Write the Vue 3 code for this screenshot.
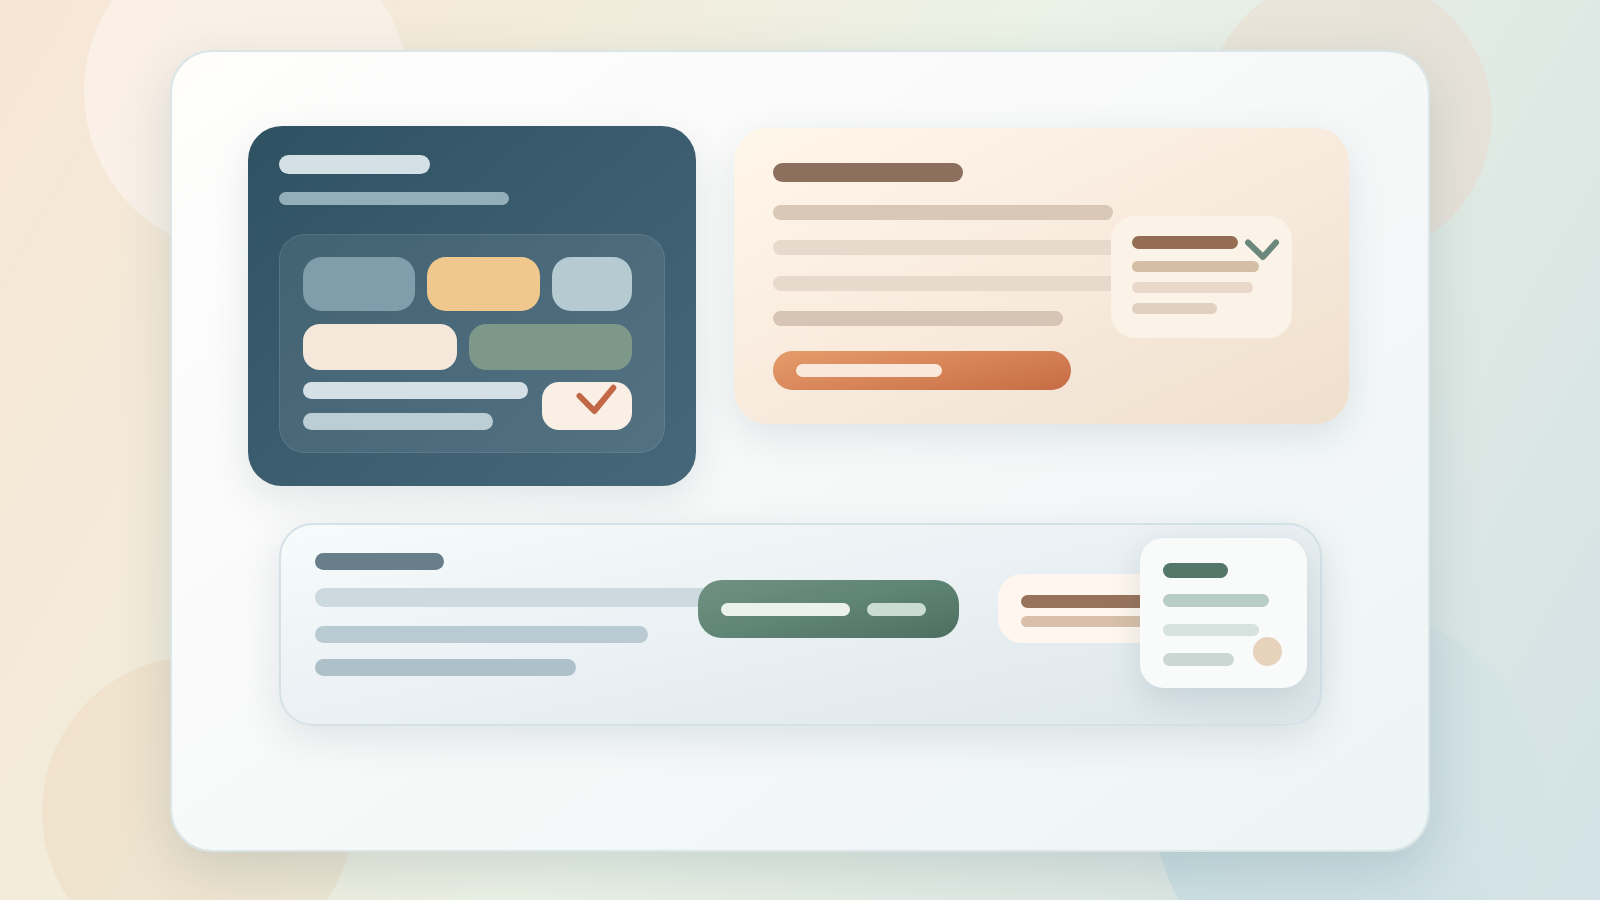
<script setup>
const planLines = [
  { width: 340, tone: 'sand' },
  { width: 372, tone: 'blush' },
  { width: 372, tone: 'blush' },
  { width: 290, tone: 'clay' },
]
</script>

<template>
  <div class="stage">
    <div class="backdrop" aria-hidden="true">
      <span class="orb orb-cream"></span>
      <span class="orb orb-rose"></span>
      <span class="orb orb-amber"></span>
      <span class="orb orb-blue"></span>
    </div>

    <main class="panel">
      <div class="row">
        <section class="card board">
          <div class="bar board-title"></div>
          <div class="bar board-sub"></div>
          <div class="tray">
            <div class="tiles tiles-top">
              <div class="tile steel"></div>
              <div class="tile gold"></div>
              <div class="tile mist"></div>
            </div>
            <div class="tiles tiles-mid">
              <div class="tile shell"></div>
              <div class="tile sage"></div>
            </div>
            <div class="tray-foot">
              <div class="tray-lines">
                <div class="bar tray-line-a"></div>
                <div class="bar tray-line-b"></div>
              </div>
              <div class="tile done">
                <svg width="90" height="48" viewBox="0 0 90 48" aria-hidden="true">
                  <path d="M37.5 14 L52.3 29 L71.3 5.8" fill="none" stroke="#c26847" stroke-width="6" stroke-linecap="round" stroke-linejoin="round" />
                </svg>
              </div>
            </div>
          </div>
        </section>

        <section class="card plan">
          <div class="bar plan-title"></div>
          <div class="plan-lines">
            <div
              v-for="(line, i) in planLines"
              :key="i"
              class="bar"
              :class="line.tone"
              :style="{ width: line.width + 'px' }"
            ></div>
          </div>
          <button class="cta" type="button" aria-label="Continue"><span class="bar cta-bar"></span></button>
          <div class="note">
            <div class="bar note-a"></div>
            <div class="bar note-b"></div>
            <div class="bar note-c"></div>
            <div class="bar note-d"></div>
            <svg class="note-check" width="36" height="24" viewBox="0 0 36 24" aria-hidden="true">
              <path d="M4 4.5 L19 19 L32 4.5" fill="none" stroke="#6c887c" stroke-width="6" stroke-linecap="round" stroke-linejoin="round" />
            </svg>
          </div>
        </section>
      </div>

      <section class="card strip">
        <div class="strip-text">
          <div class="bar strip-title"></div>
          <div class="bar strip-a"></div>
          <div class="bar strip-b"></div>
          <div class="bar strip-c"></div>
        </div>
        <button class="go" type="button" aria-label="Open">
          <span class="bar go-a"></span>
          <span class="bar go-b"></span>
        </button>
        <div class="chip">
          <div class="bar chip-a"></div>
          <div class="bar chip-b"></div>
        </div>
        <div class="ticket">
          <div class="bar ticket-a"></div>
          <div class="bar ticket-b"></div>
          <div class="bar ticket-c"></div>
          <div class="bar ticket-d"></div>
          <span class="dot"></span>
        </div>
      </section>
    </main>
  </div>
</template>

<style>
body {
  margin: 0;
}
</style>

<style scoped>
* {
  box-sizing: border-box;
}
.stage {
  position: relative;
  display: flex;
  min-height: 100vh;
  padding: 50px 170px 48px;
  overflow: hidden;
  font-family: Inter, "Liberation Sans", sans-serif;
  background: linear-gradient(120deg, #f7e6d5 0%, #f3ecdb 26%, #ebf2e7 50%, #dee8e4 78%, #d2e2e6 100%);
}
.backdrop {
  position: absolute;
  inset: 0;
}
.orb {
  position: absolute;
  border-radius: 50%;
}
.orb-cream {
  left: 84px;
  top: -71px;
  width: 325px;
  height: 325px;
  background: rgba(252, 246, 240, 0.62);
}
.orb-rose {
  right: 108px;
  top: -27px;
  width: 288px;
  height: 288px;
  background: rgba(240, 212, 196, 0.38);
}
.orb-amber {
  left: 42px;
  bottom: -68px;
  width: 312px;
  height: 312px;
  background: rgba(232, 204, 170, 0.27);
}
.orb-blue {
  right: 54px;
  bottom: -101px;
  width: 392px;
  height: 392px;
  background: linear-gradient(90deg, rgba(186, 216, 226, 0.5) 0%, rgba(198, 220, 229, 0.42) 65%, rgba(210, 226, 230, 0.2) 100%);
}
.panel {
  position: relative;
  flex: 1;
  min-width: 0;
  padding: 74px 79px 74px 76px;
  border: 2px solid #d9e5e7;
  border-radius: 42px;
  background: linear-gradient(145deg, #fffefd 0%, #f8f9f9 45%, #edf4f4 100%);
  background-clip: padding-box;
  box-shadow: 0 18px 52px rgba(46, 82, 92, 0.17);
}
.row {
  display: grid;
  grid-template-columns: 448fr 615fr;
  gap: 38px;
  align-items: start;
}
.card {
  position: relative;
  border-radius: 34px;
  box-shadow: 0 12px 38px rgba(46, 82, 92, 0.12);
}
.bar {
  display: block;
  max-width: 100%;
  border-radius: 10px;
}
.board {
  padding: 29px 31px 33px;
  background: linear-gradient(140deg, #2f5263 0%, #466779 100%);
}
.board-title {
  width: 151px;
  height: 19px;
  background: #d3e1e7;
}
.board-sub {
  width: 230px;
  height: 13px;
  margin-top: 18px;
  background: #94aeba;
}
.tray {
  margin-top: 29px;
  padding: 22px 32px 22px 23px;
  border: 1px solid rgba(255, 255, 255, 0.1);
  border-radius: 26px;
  background: rgba(255, 255, 255, 0.08);
}
.tiles {
  display: grid;
  gap: 12px;
}
.tiles-top {
  grid-template-columns: 112fr 113fr 80fr;
}
.tiles-mid {
  grid-template-columns: 154fr 163fr;
  margin-top: 13px;
}
.tile {
  height: 54px;
  border-radius: 19px;
}
.tiles-mid .tile {
  height: 46px;
  border-radius: 17px;
}
.steel {
  background: #7f9dab;
}
.gold {
  background: #f0c88e;
}
.mist {
  background: #b6cad2;
}
.shell {
  background: #f5e7da;
}
.sage {
  background: #7d9789;
}
.tray-foot {
  display: flex;
  justify-content: space-between;
  margin-top: 12px;
}
.tray-lines {
  display: flex;
  flex-direction: column;
  justify-content: space-between;
}
.tray-line-a {
  width: 225px;
  height: 17px;
  background: #d4e0e5;
}
.tray-line-b {
  width: 190px;
  height: 17px;
  background: #bbced5;
}
.tray-foot .done {
  width: 90px;
  height: 48px;
  border-radius: 17px;
  background: #faefe5;
}
.done svg {
  display: block;
}
.plan {
  margin-top: 2px;
  padding: 35px 39px 34px;
  background: linear-gradient(155deg, #fff6ea 0%, #f9ecdf 45%, #efdfcd 100%);
}
.plan-title {
  width: 190px;
  height: 19px;
  background: #8c6f5c;
}
.plan-lines {
  display: flex;
  flex-direction: column;
  justify-content: space-between;
  height: 121px;
  margin-top: 23px;
}
.plan-lines .bar {
  height: 15px;
}
.sand {
  background: #d9c8b8;
}
.blush {
  background: #e7d9cc;
}
.clay {
  background: #d6c4b5;
}
.cta {
  display: flex;
  align-items: center;
  width: 298px;
  height: 39px;
  margin: 25px 0 0;
  padding: 0 23px;
  border: 0;
  border-radius: 20px;
  background: linear-gradient(168deg, #e69c6b 0%, #c76c45 100%);
}
.cta-bar {
  width: 146px;
  height: 13px;
  background: #fae8db;
}
.note {
  position: absolute;
  top: 88px;
  right: 57px;
  width: 181px;
  height: 122px;
  padding: 20px 21px;
  border-radius: 24px;
  background: #fbf3e7;
}
.note-a {
  width: 106px;
  height: 13px;
  background: #946d52;
}
.note-b {
  width: 127px;
  height: 11px;
  margin-top: 12px;
  background: #d4bea5;
}
.note-c {
  width: 121px;
  height: 11px;
  margin-top: 10px;
  background: #e8d8c9;
}
.note-d {
  width: 85px;
  height: 11px;
  margin-top: 10px;
  background: #e1d0c0;
}
.note-check {
  position: absolute;
  top: 22px;
  right: 12px;
}
.strip {
  display: flex;
  align-items: flex-start;
  margin: 37px 27px 0 31px;
  padding: 28px 34px 48px;
  border: 2px solid #d4e1e7;
  background: linear-gradient(168deg, #f6fbfb 0%, #ebf1f4 45%, #dde6ea 100%);
}
.strip-text {
  flex: 1;
  min-width: 0;
}
.strip-title {
  width: 129px;
  height: 17px;
  background: #687f8b;
}
.strip-a {
  width: 400px;
  max-width: none;
  height: 19px;
  margin-top: 18px;
  background: #ccd9df;
}
.strip-b {
  width: 333px;
  height: 17px;
  margin-top: 19px;
  background: #bacad2;
}
.strip-c {
  width: 261px;
  height: 17px;
  margin-top: 16px;
  background: #aec1ca;
}
.go {
  position: relative;
  display: flex;
  flex: none;
  align-items: center;
  gap: 17px;
  width: 261px;
  height: 58px;
  margin: 27px 0 0;
  padding: 0 23px;
  border: 0;
  border-radius: 24px;
  background: linear-gradient(165deg, #719182 0%, #5f8574 48%, #4e6f62 100%);
}
.go-a {
  width: 129px;
  height: 13px;
  background: #ebf2ed;
}
.go-b {
  width: 59px;
  height: 13px;
  background: #cadcd3;
}
.chip {
  flex: none;
  width: 180px;
  height: 69px;
  margin: 21px 108px 0 39px;
  padding: 21px 23px;
  border-radius: 24px;
  background: #fff7ef;
}
.chip-a {
  height: 13px;
  background: #98735c;
}
.chip-b {
  height: 11px;
  margin-top: 8px;
  background: #d8c0aa;
}
.ticket {
  position: absolute;
  top: 13px;
  right: 13px;
  width: 167px;
  height: 150px;
  padding: 25px 23px;
  border-radius: 24px;
  background: #f9fbfb;
  box-shadow: 0 12px 34px rgba(46, 82, 92, 0.15);
}
.ticket-a {
  width: 65px;
  height: 15px;
  background: #54776a;
}
.ticket-b {
  width: 106px;
  height: 13px;
  margin-top: 16px;
  background: #b7cdc6;
}
.ticket-c {
  width: 96px;
  height: 12px;
  margin-top: 17px;
  background: #d6e2de;
}
.ticket-d {
  width: 71px;
  height: 13px;
  margin-top: 17px;
  background: #cad7d2;
}
.dot {
  position: absolute;
  right: 25px;
  bottom: 22px;
  width: 29px;
  height: 29px;
  border-radius: 50%;
  background: #e7d2bc;
}
</style>
